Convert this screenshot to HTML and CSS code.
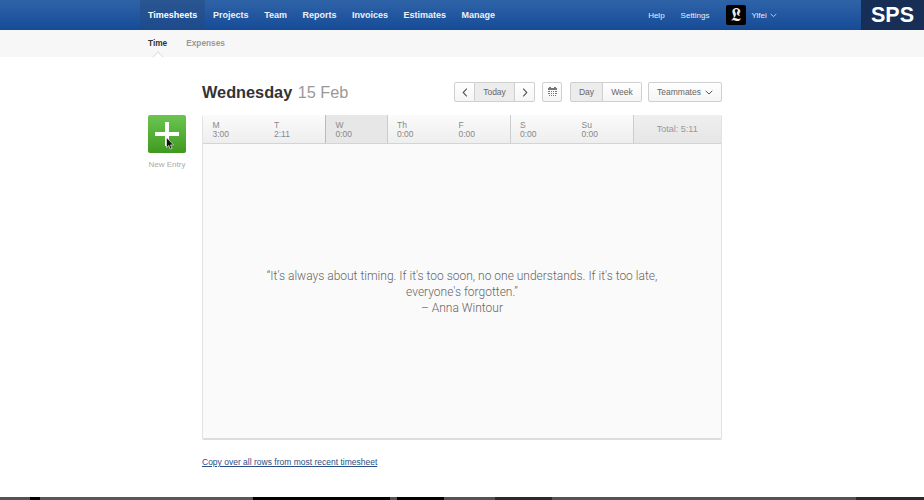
FILE: index.html
```html
<!DOCTYPE html>
<html lang="en">
<head>
    <meta charset="UTF-8">
    <meta name="viewport" content="width=device-width, initial-scale=1.0">
    <title>Timesheets</title>
    <link rel="stylesheet" href="styles.css">
</head>
<body>
    <header class="topbar">
        <nav class="main-nav">
            <a class="active" href="#">Timesheets</a>
            <a href="#">Projects</a>
            <a href="#">Team</a>
            <a href="#">Reports</a>
            <a href="#">Invoices</a>
            <a href="#">Estimates</a>
            <a href="#">Manage</a>
        </nav>
        <div class="user-nav">
            <a class="help-link" href="#">Help</a>
            <a class="settings-link" href="#">Settings</a>
            <span class="avatar">𝕷</span>
            <a class="user-link" href="#">Yifei
                <svg width="7" height="5" viewBox="0 0 7 5"><path d="M.7 1l2.800 2.600L6.300 1" fill="none" stroke="#c9d6ea" stroke-width=".9"/></svg>
            </a>
        </div>
        <div class="logo">SPS</div>
    </header>

    <div class="subnav">
        <a class="active" href="#">Time</a>
        <a href="#">Expenses</a>
    </div>

    <main class="page">
        <aside class="new-entry">
            <button class="new-btn" type="button">
                <svg width="24" height="24" viewBox="0 0 24 24"><path d="M10 0h4v10h10v4H14v10h-4V14H0v-4h10z" fill="#fff"/></svg>
                <svg class="cursor" width="9" height="13" viewBox="0 0 9 13"><path d="M.5.500v10l2.300-2 1.500 3.500 1.700-.7-1.500-3.400h3z" fill="#111" stroke="#fff" stroke-width=".6"/></svg>
            </button>
            <span class="new-label">New Entry</span>
        </aside>

        <section class="content">
            <div class="toolbar">
                <h1>Wednesday <span>15 Feb</span></h1>
                <div class="controls">
                    <div class="btn-group">
                        <button class="btn arrow" type="button"><svg width="6" height="9" viewBox="0 0 6 9"><path d="M4.800.7L1.200 4.500l3.600 3.800" fill="none" stroke="#555" stroke-width="1.100"/></svg></button>
                        <button class="btn on today" type="button">Today</button>
                        <button class="btn arrow" type="button"><svg width="6" height="9" viewBox="0 0 6 9"><path d="M1.200.7l3.600 3.800-3.600 3.800" fill="none" stroke="#555" stroke-width="1.100"/></svg></button>
                    </div>
                    <button class="btn single cal" type="button">
                        <svg width="9" height="10" viewBox="0 0 9 10"><path d="M1 0h2v1H1zM6 0h2v1H6zM0 1h9v2H0zM0 4h2v1H0zM3 4h1v1H3zM5 4h1v1H5zM7 4h2v1H7zM0 6h2v1H0zM3 6h1v1H3zM5 6h1v1H5zM7 6h2v1H7zM1 8h1v1H1zM3 8h1v1H3zM5 8h1v1H5zM7 8h1v1H7z" fill="#777"/></svg>
                    </button>
                    <div class="btn-group view-group">
                        <button class="btn on day" type="button">Day</button>
                        <button class="btn week" type="button">Week</button>
                    </div>
                    <button class="btn single mates" type="button">Teammates
                        <svg width="8" height="5" viewBox="0 0 8 5"><path d="M.7.800L4 4 7.300.8" fill="none" stroke="#555" stroke-width="1"/></svg>
                    </button>
                </div>
            </div>

            <div class="sheet">
                <div class="days">
                    <div class="day-tab"><b>M</b>3:00</div>
                    <div class="day-tab split"><b>T</b>2:11</div>
                    <div class="day-tab current"><b>W</b>0:00</div>
                    <div class="day-tab"><b>Th</b>0:00</div>
                    <div class="day-tab edge"><b>F</b>0:00</div>
                    <div class="day-tab"><b>S</b>0:00</div>
                    <div class="day-tab edge"><b>Su</b>0:00</div>
                    <div class="total">Total: 5:11</div>
                </div>
                <div class="quote">
                    <p>“It's always about timing. If it's too soon, no one understands. If it's too late, everyone's forgotten.”<br>– Anna Wintour</p>
                </div>
            </div>

            <a class="copy-link" href="#">Copy over all rows from most recent timesheet</a>
        </section>
    </main>
    <div class="bottom-strip"></div>
</body>
</html>
```

FILE: styles.css
```css
html, body {
    height: 500px;
    overflow: hidden;
}

body {
    font-family: "Liberation Sans", Arial, sans-serif;
    margin: 0;
    padding: 0;
    background-color: #fff;
    color: #444;
    display: flex;
    flex-direction: column;
}

a {
    text-decoration: none;
}

.topbar {
    height: 30px;
    flex: none;
    display: flex;
    align-items: stretch;
    padding-left: 140px;
    background: linear-gradient(#2f63a8, #164b97);
}

.main-nav {
    display: flex;
}

.main-nav a {
    color: #fff;
    font-size: 9px;
    font-weight: bold;
    line-height: 30px;
    padding: 0 7.750px;
    opacity: .92;
}

.main-nav a.active {
    padding: 0 8px;
    background: linear-gradient(#2a5692, #1c4a8c);
    opacity: 1;
}

.user-nav {
    margin-left: auto;
    display: flex;
    align-items: center;
    font-size: 8px;
}

.user-nav a {
    color: #e8eef7;
}

.help-link {
    margin-right: 16px;
}

.settings-link {
    margin-right: 16px;
}

.avatar {
    width: 20px;
    height: 20px;
    border-radius: 2px;
    background-color: #000;
    color: #eee;
    font-family: "DejaVu Serif", "Liberation Serif", serif;
    font-size: 18px;
    line-height: 20px;
    text-align: center;
    margin-right: 6px;
}

.user-link svg {
    margin-left: 1px;
}

.logo {
    width: 63px;
    margin-left: 84px;
    background-color: #172f56;
    color: #fff;
    font-size: 21.500px;
    font-weight: bold;
    line-height: 30px;
    text-align: center;
}

.subnav {
    height: 27px;
    flex: none;
    display: flex;
    gap: 19px;
    padding-left: 148px;
    background-color: #f7f7f7;
    font-size: 8.300px;
    font-weight: bold;
    line-height: 27px;
    position: relative;
}

.subnav a {
    color: #999;
}

.subnav a.active {
    color: #333;
}

.subnav::after {
    content: "";
    position: absolute;
    left: 154px;
    bottom: -4px;
    width: 7px;
    height: 7px;
    background-color: #fff;
    border-left: 1px solid #e0e0e0;
    border-top: 1px solid #e0e0e0;
    transform: rotate(45deg);
}

.page {
    flex: 1;
    display: flex;
    padding-left: 148px;
}

.new-entry {
    width: 38px;
    margin-right: 16px;
    padding-top: 58px;
    display: flex;
    flex-direction: column;
    align-items: center;
}

.new-btn {
    width: 38px;
    height: 38px;
    padding: 0;
    border: none;
    border-radius: 2px;
    background: linear-gradient(#6cc551, #40991f);
    display: flex;
    align-items: center;
    justify-content: center;
    position: relative;
}

.cursor {
    position: absolute;
    left: 18px;
    top: 22px;
}

.new-label {
    margin-top: 7px;
    font-size: 8px;
    color: #aaa;
    white-space: nowrap;
}

.content {
    width: 520px;
    padding-top: 24px;
}

.toolbar {
    height: 34px;
    display: flex;
    justify-content: space-between;
    align-items: flex-start;
}

h1 {
    margin: 0;
    font-size: 16.300px;
    font-weight: bold;
    line-height: 22px;
    color: #333;
}

h1 span {
    font-weight: normal;
    color: #999;
    margin-left: 1px;
}

.controls {
    display: flex;
    gap: 7px;
    margin-top: 1px;
}

.btn-group {
    display: flex;
}

.view-group {
    margin-left: 1px;
    margin-right: -1px;
}

.btn {
    height: 20px;
    padding: 0;
    font-family: inherit;
    font-size: 8.500px;
    color: #666;
    background: linear-gradient(#fff, #f5f5f5);
    border: 1px solid #cfcfcf;
    border-left-width: 0;
    display: flex;
    align-items: center;
    justify-content: center;
}

.btn-group .btn:first-child,
.btn.single {
    border-left-width: 1px;
    border-top-left-radius: 2px;
    border-bottom-left-radius: 2px;
}

.btn-group .btn:last-child,
.btn.single {
    border-top-right-radius: 2px;
    border-bottom-right-radius: 2px;
}

.btn.on {
    background: #ececec;
}

.arrow {
    width: 20px;
}

.btn-group .arrow:first-child {
    width: 21px;
}

.today {
    width: 40px;
}

.cal {
    width: 20px;
}

.day {
    width: 33px;
}

.week {
    width: 39px;
}

.mates {
    width: 74px;
    gap: 4px;
}

.sheet {
    height: 325px;
    box-sizing: border-box;
    display: flex;
    flex-direction: column;
    background-color: #fafafa;
    border: 1px solid #e2e2e2;
    border-bottom: 2px solid #dcdcdc;
    border-radius: 2px;
}

.days {
    height: 29px;
    flex: none;
    display: flex;
    box-sizing: border-box;
    background: linear-gradient(#fbfbfb, #eeeeef);
    border-bottom: 1px solid #d4d4d4;
    margin-top: -1px;
}

.day-tab {
    width: 61.500px;
    box-sizing: border-box;
    padding: 6px 0 0 9.500px;
    font-size: 8.500px;
    line-height: 9px;
    color: #888;
}

.day-tab b {
    display: block;
    font-weight: normal;
}

.day-tab.split {
    border-right: 1px solid #bbb;
}

.day-tab.current {
    background: #e7e7e7;
    border-right: 1px solid #ccc;
}

.day-tab.edge {
    border-right: 1px solid #ccc;
}

.total {
    flex: 1;
    background: linear-gradient(#efefef, #e6e6e6);
    font-size: 9px;
    line-height: 28px;
    text-align: center;
    color: #999;
}

.quote {
    flex: 1;
    display: flex;
    align-items: center;
    justify-content: center;
    padding: 2px 60px 0;
}

.quote p {
    margin: 0;
    font-family: Roboto, "Liberation Sans", sans-serif;
    font-weight: 300;
    font-size: 12px;
    line-height: 16px;
    text-align: center;
    color: #666;
}

.copy-link {
    display: block;
    margin-top: 17px;
    font-size: 8.500px;
    color: #2a4f86;
    text-decoration: underline;
}

.bottom-strip {
    height: 3px;
    flex: none;
    background: linear-gradient(90deg, #55524f 0, #55524f 30px, #000 30px, #000 40px, #5a5755 40px, #5a5755 253px, #000 253px, #000 390px, #55524f 390px, #55524f 397px, #000 397px, #000 444px, #55524f 444px, #55524f 495px, #2c2a28 495px, #2c2a28 552px, #55524f 552px, #55524f 856px, #2c2a28 856px, #2c2a28 924px);
}
```
